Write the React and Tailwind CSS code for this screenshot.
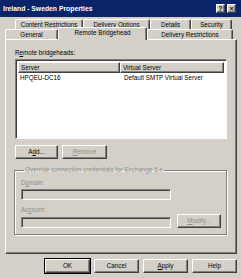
import React from "react";

const raised =
  "bg-[#d4d0c8] border-t border-l border-t-white border-l-white border-r border-b border-r-[#404040] border-b-[#404040] shadow-[inset_-1px_-1px_0_#808080]";
const sunken =
  "border-t border-l border-t-[#808080] border-l-[#808080] border-r border-b border-r-white border-b-white shadow-[inset_1px_1px_0_#404040]";

const Btn = ({ className = "", disabled, isDefault, children }) => (
  <div
    className={`h-[14px] flex items-center justify-center ${raised} ${
      disabled ? "text-[#8e8e8e]" : "text-black"
    } ${isDefault ? "outline outline-1 outline-black" : ""} ${className}`}
  >
    {children}
  </div>
);

const Tab = ({ className = "", children }) => (
  <div
    className={`h-[10px] flex items-center justify-center bg-[#d4d0c8] border-t border-l border-t-white border-l-white border-r border-r-[#404040] rounded-tl-[2px] rounded-tr-[2px] shadow-[inset_-1px_0_0_#808080] ${className}`}
  >
    {children}
  </div>
);

export default function App() {
  return (
    <div className="w-[241px] h-[278px] bg-[#d4d0c8] flex flex-col overflow-hidden font-['Liberation_Sans',Arial,sans-serif] text-[6.3px] leading-[8px] text-black">
      {/* title bar */}
      <div className="h-[17px] bg-[#0a246a] flex items-center justify-between pl-[3px] pr-[5px]">
        <span className="text-white font-bold text-[6.8px]">Ireland - Sweden Properties</span>
        <div className="flex gap-[2px]">
          <div className={`w-[9px] h-[9px] flex items-center justify-center text-[7px] font-bold leading-none ${raised}`}>?</div>
          <div className={`w-[9px] h-[9px] flex items-center justify-center text-[7px] font-bold leading-none ${raised}`}>×</div>
        </div>
      </div>

      {/* tabs */}
      <div className="mt-[2px] pl-[5px] pr-[4px]">
        <div className="flex pl-[10px]">
          <Tab className="w-[68px]">Content Restrictions</Tab>
          <Tab className="w-[67px]">Delivery Options</Tab>
          <Tab className="w-[41px]">Details</Tab>
          <Tab className="w-[41px]">Security</Tab>
        </div>
        <div className="flex items-end h-[10px]">
          <Tab className="w-[53px]">General</Tab>
          <div className="relative z-10 w-[89px] h-[13px] mb-[-1px] flex items-start pt-[1px] justify-center bg-[#d4d0c8] border-t border-l border-t-white border-l-white border-r border-r-[#404040] rounded-tl-[2px] rounded-tr-[2px] shadow-[inset_-1px_0_0_#808080]">
            Remote Bridgehead
          </div>
          <Tab className="w-[86px]">Delivery Restrictions</Tab>
        </div>
      </div>

      {/* panel */}
      <div className="mx-[5px] mr-[4px] h-[215px] border-t border-l border-t-white border-l-white border-r border-b border-r-[#404040] border-b-[#404040] shadow-[inset_-1px_-1px_0_#808080] pl-[9px] pr-[9px]">
        <div className="mt-[9px] h-[8px]">
          R<u>e</u>mote bridgeheads:
        </div>
        <div className={`mt-[2px] w-[212px] h-[80px] bg-white ${sunken} p-[2px] pl-[2px]`}>
          <div className="flex h-[11px]">
            <div className={`w-[102px] flex items-center pl-[2px] ${raised}`}>Server</div>
            <div className={`flex-1 flex items-center pl-[2px] ${raised}`}>Virtual Server</div>
          </div>
          <div className="flex h-[9px] items-center">
            <div className="w-[104px] pl-[2px]">HPQEU-DC16</div>
            <div className="pl-[2px]">Default SMTP Virtual Server</div>
          </div>
        </div>
        <div className="mt-[6px] flex gap-[4px]">
          <Btn className="w-[43px]">
            A<u>d</u>d...
          </Btn>
          <Btn className="w-[45px]" disabled>
            <u>R</u>emove
          </Btn>
        </div>
        <fieldset className="mt-[7px] w-[213px] ml-[-1px] border border-[#808080] shadow-[1px_1px_0_#fff,inset_1px_1px_0_#fff] pl-[6px] pb-[6px] h-[69px]">
          <legend className="ml-[3px] px-[1px] text-[#8e8e8e] leading-[8px]">
            Override connection credentials for Exchange 5.x
          </legend>
          <div className="mt-[5px] h-[8px] text-[#8e8e8e]">
            D<u>o</u>main:
          </div>
          <div className={`mt-[2px] w-[150px] h-[11px] bg-[#d4d0c8] ${sunken}`} />
          <div className="mt-[6px] h-[8px] text-[#8e8e8e]">
            Ac<u>c</u>ount:
          </div>
          <div className="flex items-end gap-[6px]">
            <div className={`w-[150px] h-[11px] bg-[#d4d0c8] ${sunken}`} />
            <Btn className="w-[44px]" disabled>
              <u>M</u>odify...
            </Btn>
          </div>
        </fieldset>
      </div>

      {/* dialog buttons */}
      <div className="mt-[5px] flex justify-end gap-[4px] pr-[4px]">
        <Btn className="w-[45px]" isDefault>
          OK
        </Btn>
        <Btn className="w-[45px]">Cancel</Btn>
        <Btn className="w-[45px]">
          <u>A</u>pply
        </Btn>
        <Btn className="w-[45px]">Help</Btn>
      </div>
    </div>
  );
}
